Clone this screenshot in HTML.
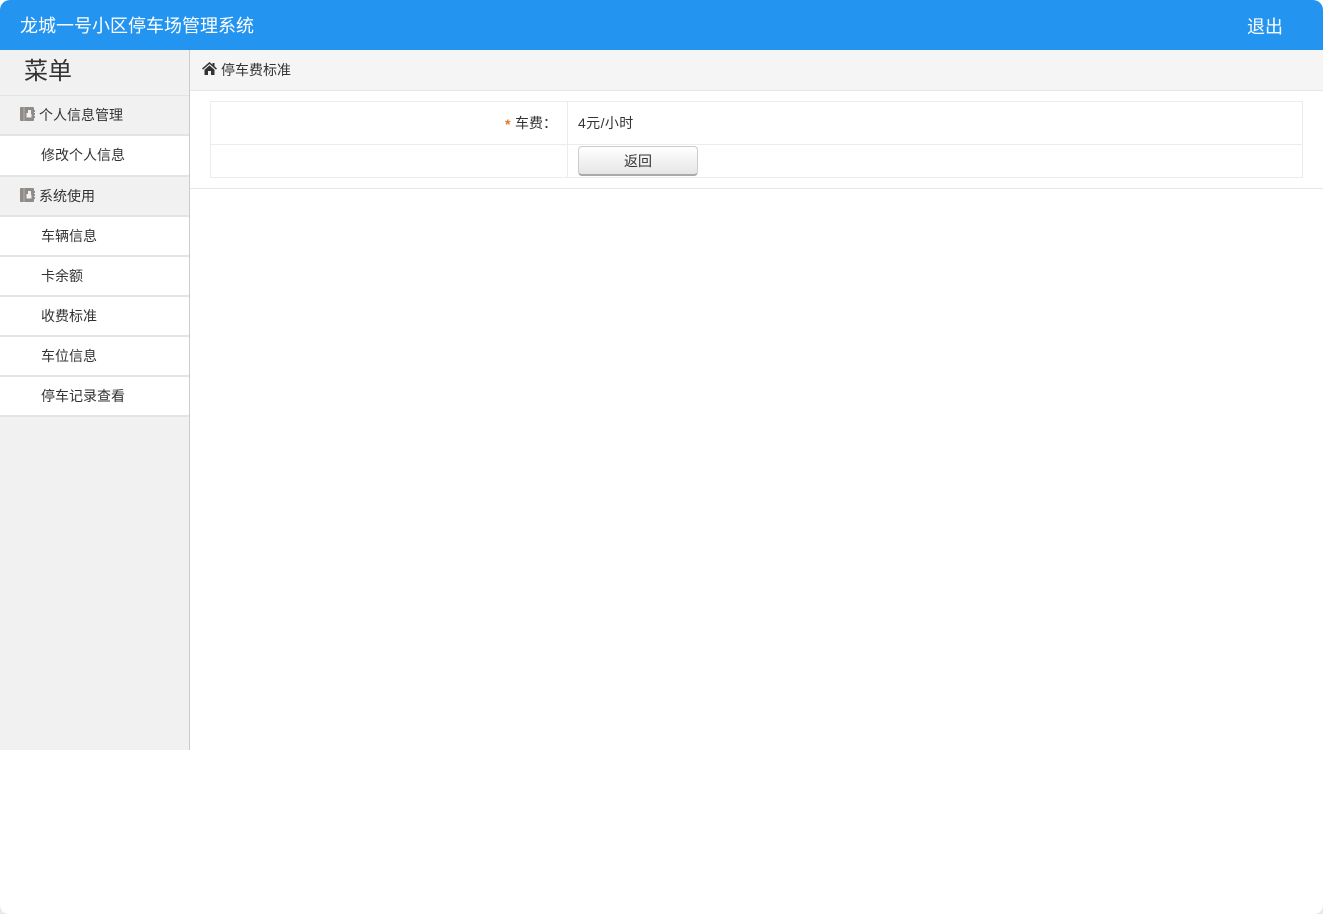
<!DOCTYPE html>
<html lang="zh">
<head>
<meta charset="utf-8">
<title>龙城一号小区停车场管理系统</title>
<style>
html,body{margin:0;padding:0;background:#fff;}
body{width:1323px;height:914px;position:relative;overflow:hidden;font-family:"Liberation Sans","Noto Sans CJK SC",sans-serif;font-size:14px;color:#333;}
.abs{position:absolute;white-space:nowrap;}
#hd{position:absolute;left:0;top:0;width:1323px;height:50px;background:#2394f0;border-radius:10px 10px 0 0;}
#side{position:absolute;left:0;top:50px;width:189px;height:700px;background:#f1f1f1;border-right:1px solid #ccc;}
.line{position:absolute;left:0;width:189px;background:#e4e4e4;}
.white{position:absolute;left:0;width:189px;background:#fff;}
.mi{position:absolute;left:41px;line-height:20px;white-space:nowrap;}
.gi{position:absolute;left:39px;line-height:20px;white-space:nowrap;}
.ic{position:absolute;left:20px;}
.b{position:absolute;background:#ececec;}
#corner{position:absolute;left:0;bottom:0;width:10px;height:10px;}
</style>
</head>
<body>
<div id="hd"></div>
<div class="abs" style="left:20px;top:13px;font-size:18px;line-height:27px;color:#fff;">龙城一号小区停车场管理系统</div>
<div class="abs" style="left:1247px;top:14px;font-size:18px;line-height:27px;color:#fff;">退出</div>

<div id="side"></div>
<div class="abs" style="left:24px;top:54px;font-size:24px;line-height:36px;color:#333;">菜单</div>
<div class="line" style="top:95px;height:1px;"></div>
<div class="line" style="top:134px;height:2px;"></div>
<div class="white" style="top:136px;height:39px;"></div>
<div class="line" style="top:175px;height:2px;"></div>
<div class="line" style="top:215px;height:2px;"></div>
<div class="white" style="top:217px;height:38px;"></div>
<div class="line" style="top:255px;height:2px;"></div>
<div class="white" style="top:257px;height:38px;"></div>
<div class="line" style="top:295px;height:2px;"></div>
<div class="white" style="top:297px;height:38px;"></div>
<div class="line" style="top:335px;height:2px;"></div>
<div class="white" style="top:337px;height:38px;"></div>
<div class="line" style="top:375px;height:2px;"></div>
<div class="white" style="top:377px;height:38px;"></div>
<div class="line" style="top:415px;height:2px;"></div>

<svg class="ic" style="top:107px" width="15" height="14" viewBox="0 0 15 14"><path fill="#8f8b87" fill-rule="evenodd" d="M0 1Q0 0 1 0H13Q14 0 14 1V3H15V5H14V6H15V8H14V9H15V11H14V13Q14 14 13 14H1Q0 14 0 13ZM8 3V6H6.500V10.500H11.500V7H11V3Z"/><rect x="3.500" y="0" width="1" height="14" fill="#b5b2af"/></svg>
<div class="gi" style="top:105px;">个人信息管理</div>
<div class="mi" style="top:145px;">修改个人信息</div>
<svg class="ic" style="top:188px" width="15" height="14" viewBox="0 0 15 14"><path fill="#8f8b87" fill-rule="evenodd" d="M0 1Q0 0 1 0H13Q14 0 14 1V3H15V5H14V6H15V8H14V9H15V11H14V13Q14 14 13 14H1Q0 14 0 13ZM8 3V6H6.500V10.500H11.500V7H11V3Z"/><rect x="3.500" y="0" width="1" height="14" fill="#b5b2af"/></svg>
<div class="gi" style="top:186px;">系统使用</div>
<div class="mi" style="top:226px;">车辆信息</div>
<div class="mi" style="top:266px;">卡余额</div>
<div class="mi" style="top:306px;">收费标准</div>
<div class="mi" style="top:346px;">车位信息</div>
<div class="mi" style="top:386px;">停车记录查看</div>

<div class="abs" style="left:190px;top:50px;width:1133px;height:40px;background:#f5f5f5;"></div>
<div class="b" style="left:190px;top:90px;width:1133px;height:1px;background:#e6e6e6;"></div>
<svg class="abs" style="left:202px;top:62px" width="15" height="13" viewBox="0 0 15 13"><path fill="#333" d="M7.500 0L10.500 2.600V1H12.500V4.300L15 6.500L14 7.600L7.500 2L1 7.600L0 6.500ZM2.500 7.700L7.500 3.400L12.500 7.700V13H9V9H6V13H2.500Z"/></svg>
<div class="abs" style="left:221px;top:60px;line-height:20px;">停车费标准</div>

<div class="b" style="left:210px;top:101px;width:1093px;height:1px;"></div>
<div class="b" style="left:210px;top:144px;width:1093px;height:1px;"></div>
<div class="b" style="left:210px;top:177px;width:1093px;height:1px;"></div>
<div class="b" style="left:210px;top:101px;width:1px;height:77px;"></div>
<div class="b" style="left:567px;top:101px;width:1px;height:77px;"></div>
<div class="b" style="left:1302px;top:101px;width:1px;height:77px;"></div>
<div class="b" style="left:190px;top:188px;width:1133px;height:1px;background:#e6e6e6;"></div>

<div class="abs" style="left:505px;top:114px;line-height:20px;font-weight:bold;"><span style="color:#e4761e;">*</span></div>
<div class="abs" style="left:515px;top:113px;line-height:20px;">车费：</div>
<div class="abs" style="left:578px;top:113px;line-height:20px;letter-spacing:.4px;">4元/小时</div>

<div class="abs" style="left:578px;top:146px;width:118px;height:27px;border:1px solid #ccc;border-bottom:2px solid #aaa;border-radius:4px;background:linear-gradient(#fff,#e6e6e6);text-align:center;line-height:28px;">返回</div>

<svg id="corner" viewBox="0 0 10 10"><path fill="#e8e8e8" d="M0 0Q0 10 10 10H0Z"/></svg>
<svg class="abs" style="right:0;bottom:0" width="10" height="10" viewBox="0 0 10 10"><path fill="#e8e8e8" d="M10 0Q10 10 0 10H10Z"/></svg>
</body>
</html>
